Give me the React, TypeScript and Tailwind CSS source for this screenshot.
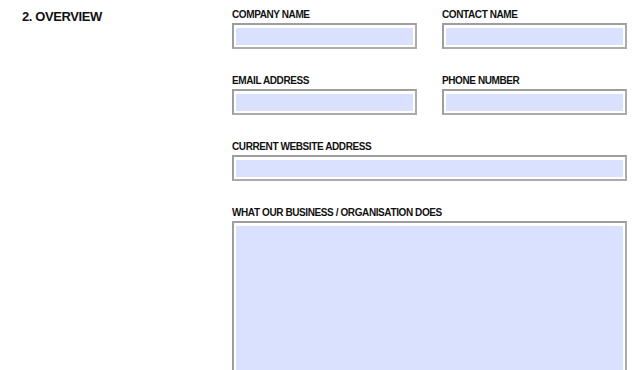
import React from "react";

function Field({ label, tall = false, className = "" }: { label: string; tall?: boolean; className?: string }) {
  return (
    <div className={`flex flex-col ${className}`}>
      <div className="text-[10px] leading-[12px] font-bold tracking-[-0.04em] text-[#111] mb-[2px]">{label}</div>
      <div className="border-2 border-[#ababab] border-t-[#9e9e9e] border-l-[#9e9e9e] bg-white px-[2px] pt-[3px] pb-[2px]">
        <div className={`bg-[#d9e1ff] ${tall ? "h-[300px]" : "h-[17px]"}`} />
      </div>
    </div>
  );
}

export default function App() {
  return (
    <div className="w-[640px] h-[370px] overflow-hidden bg-white flex font-['Liberation_Sans',Arial,sans-serif]">
      <div className="w-[232px] shrink-0 pl-[22px] pt-[9px]">
        <h2 className="text-[13px] leading-[16px] font-bold tracking-[-0.03em] text-[#111]">2. OVERVIEW</h2>
      </div>
      <div className="w-[395px] shrink-0 pt-[9px] grid grid-cols-2 gap-x-[25px] gap-y-[26px] content-start">
        <Field label="COMPANY NAME" />
        <Field label="CONTACT NAME" />
        <Field label="EMAIL ADDRESS" />
        <Field label="PHONE NUMBER" />
        <Field label="CURRENT WEBSITE ADDRESS" className="col-span-2" />
        <Field label="WHAT OUR BUSINESS / ORGANISATION DOES" tall className="col-span-2" />
      </div>
    </div>
  );
}
